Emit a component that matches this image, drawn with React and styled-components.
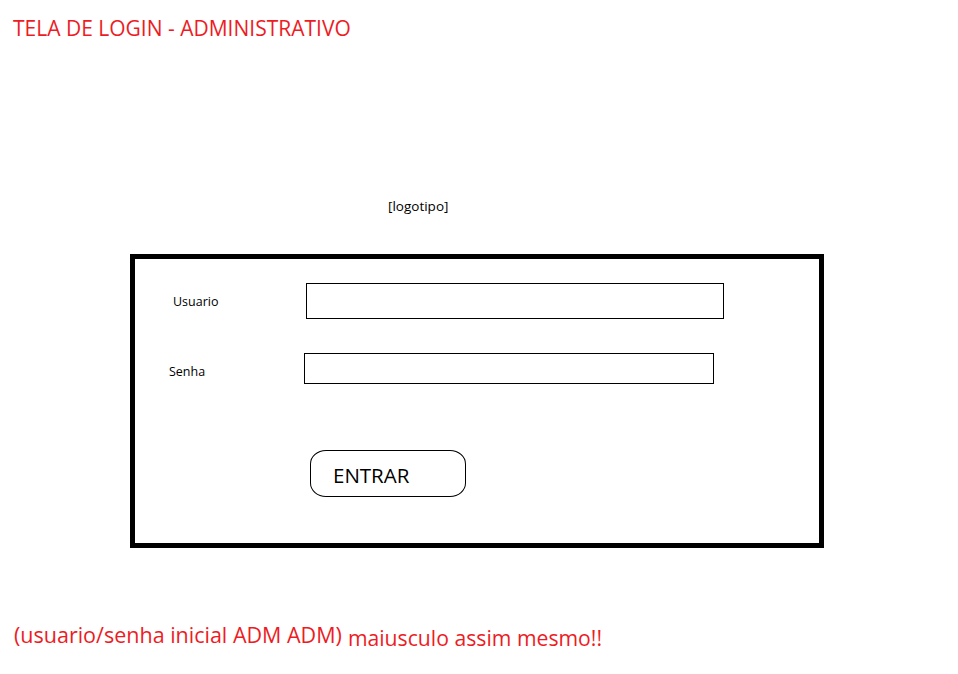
import React from 'react';
import styled, { createGlobalStyle } from 'styled-components';

const GlobalStyle = createGlobalStyle`
    html, body {
        margin: 0;
        padding: 0;
        background: #ffffff;
    }
    body {
        font-family: "Open Sans", "Noto Sans", sans-serif;
        color: #000000;
    }
`;

const App = () => {
    return (
        <Page>
            <GlobalStyle />
            <Title>TELA DE LOGIN - ADMINISTRATIVO</Title>
            <Logo>[logotipo]</Logo>
            <Card>
                <FieldRow $top={24} $labelLeft={38} $inputLeft={171} $labelShift={1}>
                    <Label>Usuario</Label>
                    <Input type="text" $width={418} $height={36} />
                </FieldRow>
                <FieldRow $top={34} $labelLeft={34} $inputLeft={169} $labelShift={3}>
                    <Label>Senha</Label>
                    <Input type="password" $width={410} $height={31} />
                </FieldRow>
                <ButtonRow>
                    <EnterButton type="button">ENTRAR</EnterButton>
                </ButtonRow>
            </Card>
            <Note>
                <NoteMain>(usuario/senha inicial ADM ADM)</NoteMain>
                <NoteSmall>maiusculo assim mesmo!!</NoteSmall>
            </Note>
        </Page>
    );
};

export default App;

const Page = styled.main`
    width: 958px;
    height: 674px;
    overflow: hidden;
    display: flex;
    flex-direction: column;
    align-items: flex-start;
`;

const Title = styled.h1`
    margin: 14px 0 0 13px;
    font-size: 21px;
    font-weight: 400;
    line-height: 28px;
    color: #ed1c24;
`;

const Logo = styled.div`
    margin: 155px 0 0 388px;
    font-size: 13.5px;
    line-height: 18px;
    color: #000000;
`;

const Card = styled.section`
    box-sizing: border-box;
    margin: 39px 0 0 130px;
    width: 694px;
    height: 294px;
    border: 5px solid #000000;
    display: flex;
    flex-direction: column;
`;

const FieldRow = styled.div`
    display: flex;
    align-items: center;
    margin-top: ${p => p.$top}px;
    padding-left: ${p => p.$labelLeft}px;

    & > span {
        position: relative;
        top: ${p => p.$labelShift}px;
    }

    & > input {
        margin-left: ${p => p.$inputLeft - p.$labelLeft}px;
    }
`;

const Label = styled.span`
    width: 0;
    white-space: nowrap;
    font-size: 12.5px;
    line-height: 18px;
`;

const Input = styled.input`
    box-sizing: border-box;
    width: ${p => p.$width}px;
    height: ${p => p.$height}px;
    border: 1px solid #000000;
    border-radius: 0;
    padding: 0 6px;
    outline: none;
    background: #ffffff;
    font: inherit;
`;

const ButtonRow = styled.div`
    display: flex;
    margin-top: 66px;
    padding-left: 175px;
`;

const EnterButton = styled.button`
    box-sizing: border-box;
    width: 156px;
    height: 47px;
    border: 1px solid #000000;
    border-radius: 16px / 14px;
    background: #ffffff;
    padding: 2px 0 0 22px;
    text-align: left;
    font-family: "Open Sans", "Noto Sans", sans-serif;
    font-size: 20.5px;
    color: #000000;
    cursor: pointer;
`;

const Note = styled.div`
    display: flex;
    align-items: baseline;
    gap: 6px;
    margin: 73px 0 0 14px;
    color: #ed1c24;
`;

const NoteMain = styled.span`
    font-size: 21.5px;
    line-height: 28px;
`;

const NoteSmall = styled.span`
    font-size: 21.2px;
    line-height: 28px;
    position: relative;
    top: 3px;
`;
